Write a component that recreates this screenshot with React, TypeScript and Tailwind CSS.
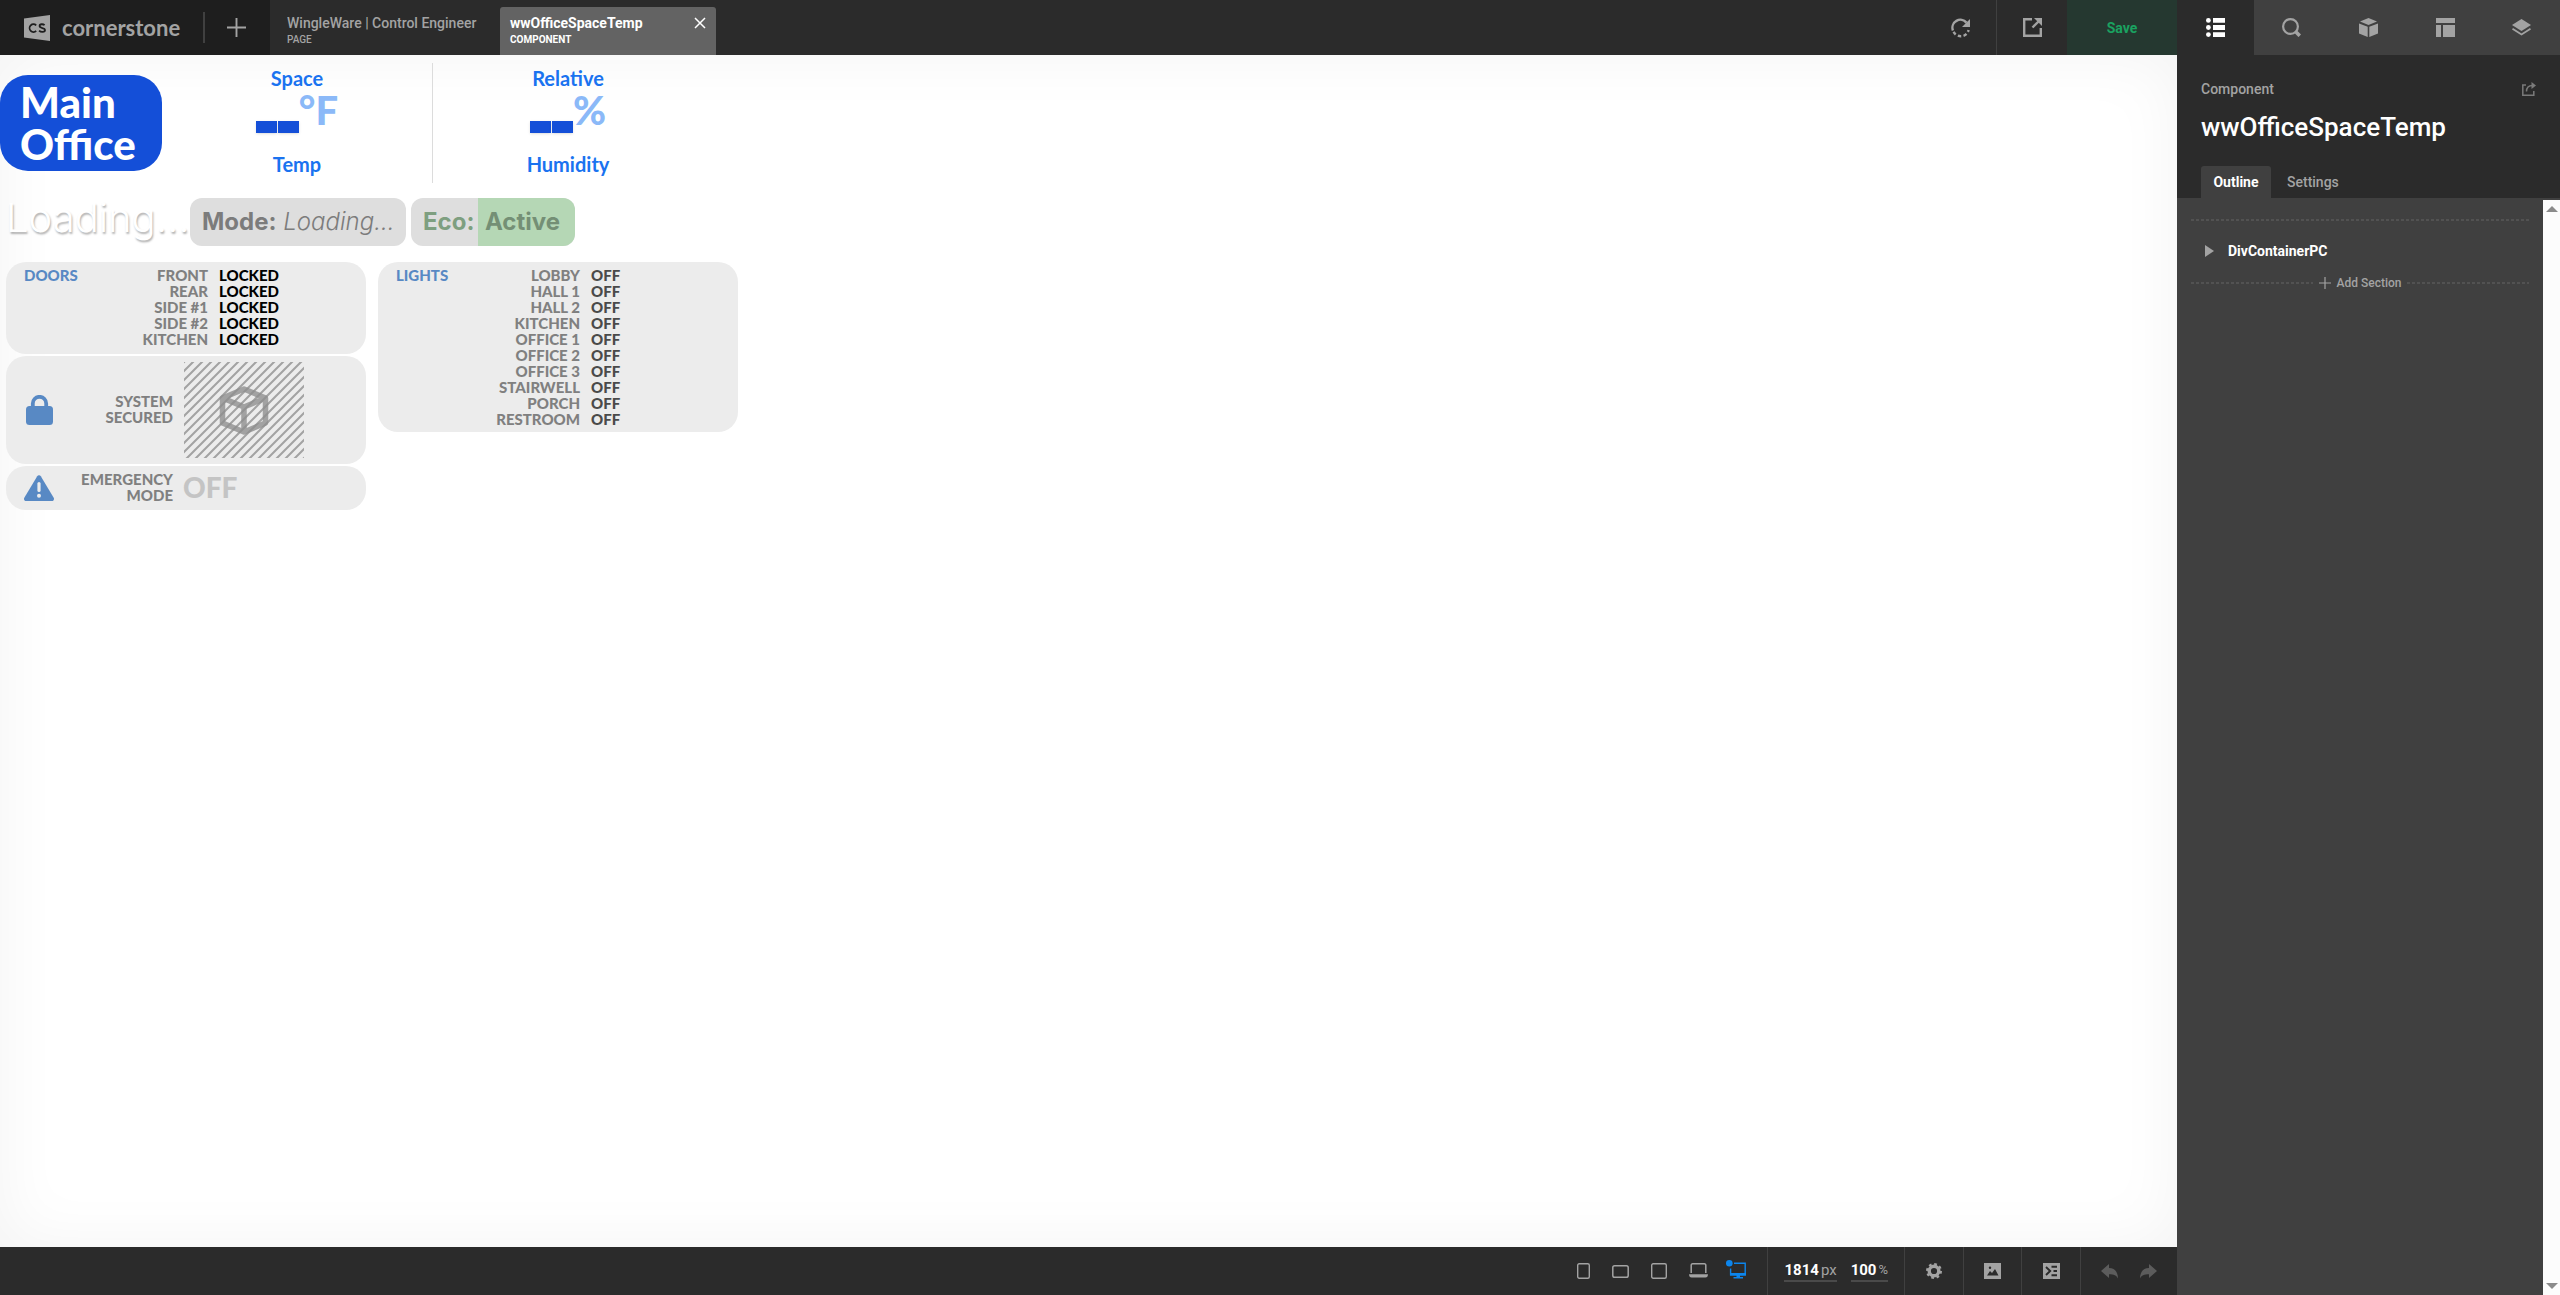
import { useState, type ReactNode } from "react";
import clsx from "clsx";

type IconProps = { className?: string };

const doors = ["FRONT", "REAR", "SIDE #1", "SIDE #2", "KITCHEN"];

const lights = [
  "LOBBY",
  "HALL 1",
  "HALL 2",
  "KITCHEN",
  "OFFICE 1",
  "OFFICE 2",
  "OFFICE 3",
  "STAIRWELL",
  "PORCH",
  "RESTROOM",
];

function LogoMark() {
  return (
    <svg viewBox="0 0 26 26" className="h-[26px] w-[26px] shrink-0">
      <path d="M0 3.4 26 0v26L0 22.6Z" fill="#a3a3a3" />
      <path d="M12.200 10.300a3.900 3.900 0 1 0 0 5.600" fill="none" stroke="#1e1e1e" strokeWidth="1.800" />
      <path
        d="M20.6 10.2c-1.4-1.3-5-1.500-5 .9 0 2.600 5.400 1.200 5.400 3.900 0 2.500-4.200 2.400-5.900.7"
        fill="none"
        stroke="#1e1e1e"
        strokeWidth="1.800"
      />
    </svg>
  );
}

function PlusIcon({ className }: IconProps) {
  return (
    <svg viewBox="0 0 20 20" className={className} fill="none" stroke="currentColor" strokeWidth="2">
      <path d="M10 0v20M0 10h20" />
    </svg>
  );
}

function CloseIcon() {
  return (
    <svg viewBox="0 0 12 12" className="h-3 w-3" fill="none" stroke="currentColor" strokeWidth="1.500">
      <path d="m1 1 10 10M11 1 1 11" />
    </svg>
  );
}

function RefreshIcon() {
  return (
    <svg viewBox="0 0 20 20" className="h-5 w-5">
      <path d="M1.900 12.500A8 8 0 0 1 15.500 4.600" fill="none" stroke="currentColor" strokeWidth="2.400" />
      <path d="M19 1v8h-8Z" fill="currentColor" />
      <path
        d="M2.600 13.800A8 8 0 0 0 17.600 12"
        fill="none"
        stroke="currentColor"
        strokeWidth="2.400"
        strokeDasharray="3.400 2.400"
      />
    </svg>
  );
}

function ExternalIcon() {
  return (
    <svg viewBox="0 0 19 19" className="h-[19px] w-[19px]" fill="none" stroke="currentColor">
      <path d="M9 1.200H1.200v16.600h16.600V10" strokeWidth="2.400" />
      <path d="m9.500 9.500 6-6" strokeWidth="2.400" />
      <path d="M11 0h8v8Z" fill="currentColor" stroke="none" />
    </svg>
  );
}

function ShareIcon() {
  return (
    <svg viewBox="0 0 14 14" className="h-3.5 w-3.5" fill="none" stroke="currentColor" strokeWidth="1.500">
      <path d="M4 3H.8v10.200h11V9" />
      <path d="M4.500 9.500c0-4 2-6 6-6" />
      <path d="M9.500 0 14 3.500 9.500 7Z" fill="currentColor" stroke="none" />
    </svg>
  );
}

function OutlineIcon() {
  return (
    <svg viewBox="0 0 19 19" className="h-[19px] w-[19px]" fill="currentColor">
      <circle cx="2.400" cy="2.400" r="2.400" />
      <circle cx="2.400" cy="9.500" r="2.400" />
      <circle cx="2.400" cy="16.600" r="2.400" />
      <path d="M7 0h12v4.800H7zM7 7.100h12v4.800H7zM7 14.200h12V19H7z" />
    </svg>
  );
}

function SearchIcon() {
  return (
    <svg viewBox="0 0 19 19" className="h-[19px] w-[19px]" fill="none" stroke="currentColor">
      <circle cx="8.500" cy="8.500" r="7.400" strokeWidth="2.200" />
      <path d="m14 14 3.800 3.800" strokeWidth="3.600" />
    </svg>
  );
}

function CubeIcon() {
  return (
    <svg viewBox="0 0 19 19" className="h-[19px] w-[19px]" fill="currentColor">
      <path d="M9.500 0 18 3.500 9.500 7 1 3.500Z" />
      <path d="m0 5.400 8.700 3.400V19L0 15.400ZM19 5.400l-8.700 3.400V19l8.700-3.600Z" />
    </svg>
  );
}

function LayoutIcon() {
  return (
    <svg viewBox="0 0 19 19" className="h-[19px] w-[19px]" fill="currentColor">
      <path d="M0 0h19v5H0zM0 7h5v12H0zM7 7h12v12H7z" />
    </svg>
  );
}

function LayersIcon() {
  return (
    <svg viewBox="0 0 19 19" className="h-[19px] w-[19px]">
      <path d="M9.500 1 19 7l-9.500 6L0 7Z" fill="currentColor" />
      <path d="m.5 10.800 9 5.700 9-5.700" fill="none" stroke="currentColor" strokeWidth="1.800" />
    </svg>
  );
}

function PhoneIcon() {
  return (
    <svg viewBox="0 0 13 16" className="h-4 w-[13px]" fill="none" stroke="currentColor" strokeWidth="1.400">
      <rect x=".7" y=".7" width="11.600" height="14.600" rx="1.500" />
    </svg>
  );
}

function PhoneWideIcon() {
  return (
    <svg viewBox="0 0 17 13" className="h-[13px] w-[17px]" fill="none" stroke="currentColor" strokeWidth="1.500">
      <rect x=".8" y=".8" width="15.400" height="11.400" rx="1.800" />
    </svg>
  );
}

function TabletIcon() {
  return (
    <svg viewBox="0 0 16 16" className="h-4 w-4" fill="none" stroke="currentColor" strokeWidth="1.400">
      <rect x=".7" y=".7" width="14.600" height="14.600" rx="1.500" />
    </svg>
  );
}

function LaptopIcon() {
  return (
    <svg viewBox="0 0 19 16" className="h-4 w-[19px]">
      <path
        d="M2.200 10V2.500a1.500 1.500 0 0 1 1.500-1.700h11.600a1.500 1.500 0 0 1 1.500 1.700V10"
        fill="none"
        stroke="currentColor"
        strokeWidth="1.500"
      />
      <path d="M0 11.200h19c0 2-1 3.300-2.500 3.300h-14C1 14.500 0 13.200 0 11.200Z" fill="currentColor" />
    </svg>
  );
}

function DesktopIcon() {
  return (
    <svg viewBox="0 0 20 19" className="h-[19px] w-5">
      <circle cx="3.300" cy="3.300" r="3.300" fill="currentColor" />
      <path d="M8 3.200h11.200v11.600H4.600V8.500" fill="none" stroke="currentColor" strokeWidth="1.400" />
      <path d="M4 13h16v2.500H4zM10.500 15h3.500v2h3v1.500H7.500V17h3z" fill="currentColor" />
    </svg>
  );
}

function GearIcon() {
  return (
    <svg viewBox="0 0 16 16" className="h-4 w-4">
      <circle cx="8" cy="8" r="4.800" fill="none" stroke="currentColor" strokeWidth="3.400" />
      <circle cx="8" cy="8" r="6.900" fill="none" stroke="currentColor" strokeWidth="2.200" strokeDasharray="2.710" />
    </svg>
  );
}

function ImageIcon() {
  return (
    <svg viewBox="0 0 17 16" className="h-4 w-[17px]">
      <path d="M0 0h17v16H0z" fill="currentColor" />
      <path d="m3 12.500 3-4.500 2 2 3-4 3.500 6.500Z" fill="#2b2b2b" />
      <circle cx="6" cy="4.800" r="1.200" fill="#2b2b2b" />
    </svg>
  );
}

function ConsoleIcon() {
  return (
    <svg viewBox="0 0 17 16" className="h-4 w-[17px]">
      <path d="M0 0h17v16H0z" fill="currentColor" />
      <path d="m3 4 4.200 4L3 12M8.500 3.700H14M10.500 8H14M8.500 12.300H14" fill="none" stroke="#2b2b2b" strokeWidth="1.900" />
    </svg>
  );
}

function UndoIcon({ className }: IconProps) {
  return (
    <svg viewBox="0 0 17 15" className={clsx("h-[15px] w-[17px]", className)} fill="currentColor">
      <path d="M8 0v4c6 .2 8.800 4 9 10.500C15.500 11.500 13 10.200 8 10.200V14L0 7Z" />
    </svg>
  );
}

function LockIcon() {
  return (
    <svg viewBox="0 0 27 30" className="h-[30px] w-[27px]">
      <path d="M6.800 12V8.500a6.700 6.700 0 0 1 13.400 0V12" fill="none" stroke="#5889c4" strokeWidth="3.800" />
      <rect y="11" width="27" height="19" rx="3.500" fill="#5889c4" />
    </svg>
  );
}

function WarningIcon() {
  return (
    <svg viewBox="0 0 30 26" className="h-[26px] w-[30px]">
      <path d="M13.200 1.200a2.100 2.100 0 0 1 3.600 0l12.900 21.600c.8 1.400-.1 3.200-1.800 3.200H2.100C.4 26-.5 24.200.3 22.800Z" fill="#5889c4" />
      <path d="M15 8.500v7" stroke="#ececec" strokeWidth="3.200" strokeLinecap="round" />
      <circle cx="15" cy="20.800" r="2" fill="#ececec" />
    </svg>
  );
}

function Placeholder() {
  return (
    <svg viewBox="0 0 120 96" className="h-24 w-[120px]">
      <defs>
        <pattern id="stripes" width="9" height="9" patternUnits="userSpaceOnUse">
          <path d="M-3 12 12-3M-3 3 3-3M6 12l6-6" stroke="#a3a3a3" strokeWidth="2.100" />
        </pattern>
      </defs>
      <path d="M0 0h120v96H0z" fill="url(#stripes)" />
      <path
        d="M60 27 81.500 36v25L60 70 38.500 61V36ZM38.500 36 60 45l21.500-9M60 45v25"
        fill="none"
        stroke="#8d8d8d"
        strokeOpacity=".78"
        strokeWidth="5.500"
        strokeLinejoin="round"
      />
    </svg>
  );
}

function TopBar() {
  return (
    <header className="flex h-[55px] shrink-0 bg-[#2b2b2b] text-[#a3a3a3]">
      <div className="flex w-[270px] items-center bg-[#1e1e1e] pl-6">
        <a href="#" className="flex items-center gap-3">
          <LogoMark />
          <span className="w-[117px] font-['Lato',sans-serif] text-[22px] leading-6 font-bold">cornerstone</span>
        </a>
        <span className="ml-6 h-[31px] w-0.5 bg-[#404040]" />
        <button type="button" aria-label="New" className="ml-[22px]">
          <PlusIcon className="h-[19px] w-[19px]" />
        </button>
      </div>

      <button type="button" className="mt-[7px] w-[230px] pr-4 pl-[17px] text-left">
        <span className="block overflow-hidden text-sm leading-[18px] font-medium whitespace-nowrap">
          WingleWare | Control Engineer
        </span>
        <span className="block text-[10px] leading-4 font-medium">PAGE</span>
      </button>

      <div className="mt-[7px] flex w-[216px] justify-between rounded-t-[3px] bg-[#636363] px-2.5 text-white">
        <button type="button" className="text-left">
          <span className="block text-sm leading-[18px] font-bold">wwOfficeSpaceTemp</span>
          <span className="block text-[10px] leading-4 font-bold">COMPONENT</span>
        </button>
        <button type="button" aria-label="Close" className="h-8">
          <CloseIcon />
        </button>
      </div>

      <div className="ml-auto flex">
        <button type="button" aria-label="Refresh" className="flex w-[72px] items-center justify-center border-r border-[#404040]">
          <RefreshIcon />
        </button>
        <button type="button" aria-label="Open" className="flex w-[70px] items-center justify-center">
          <ExternalIcon />
        </button>
        <button type="button" className="w-[110px] bg-[#253830] text-sm font-bold text-[#1aa260]">
          Save
        </button>
      </div>
    </header>
  );
}

function Reading({ top, unit, bottom }: { top: string; unit: string; bottom: string }) {
  return (
    <div className="flex w-[270px] flex-col items-center pb-1 text-xl font-bold text-[#1a73f0]">
      <p className="leading-6">{top}</p>
      <p className="flex h-[62px] items-start text-[40px] leading-10 font-black text-[#8bb9f8]">
        <span className="mt-[31px] flex gap-px" aria-label="no reading">
          <span className="h-3 w-[21px] bg-[#144fd8] shadow-sm" />
          <span className="h-3 w-[21px] bg-[#144fd8] shadow-sm" />
        </span>
        <span>{unit}</span>
      </p>
      <p className="leading-6">{bottom}</p>
    </div>
  );
}

function StatusRows({ names, state, stateClass }: { names: string[]; state: string; stateClass: string }) {
  return (
    <table className="self-start leading-4">
      <tbody>
        {names.map((name) => (
          <tr key={name}>
            <th scope="row" className="w-[130px] p-0 text-right font-black text-[#808080]">
              {name}
            </th>
            <td className={clsx("p-0 pl-[11px] font-black", stateClass)}>{state}</td>
          </tr>
        ))}
      </tbody>
    </table>
  );
}

function Card({ className, children }: { className?: string; children: ReactNode }) {
  return <section className={clsx("flex w-[360px] rounded-[20px] bg-[#ececec]", className)}>{children}</section>;
}

function Canvas() {
  return (
    <main className="flex-1 bg-white font-['Lato',sans-serif] shadow-[inset_0_0_65px_rgba(0,0,0,0.05)]">
      <div className="flex pt-2">
        <h1 className="mt-3 h-24 w-[162px] rounded-[28px] bg-[#144fd8] pt-1.5 pl-5 text-[42px] leading-[42px] font-black text-white">
          Main
          <br />
          Office
        </h1>
        <div className="flex h-[120px] divide-x divide-[#dcdcdc]">
          <div className="flex items-center">
            <Reading top="Space" unit="°F" bottom="Temp" />
          </div>
          <div className="flex items-center">
            <Reading top="Relative" unit="%" bottom="Humidity" />
          </div>
        </div>
      </div>

      <div className="mt-[15px] flex h-12 items-center pl-1.5 font-['Inter',sans-serif] text-2xl leading-[48px] text-[#7c7c7c]">
        <p className="w-[184px] pb-2 text-[40px] leading-10 font-light text-white [text-shadow:1px_2px_2px_rgba(0,0,0,0.3)]">
          Loading...
        </p>
        <p className="w-[216px] rounded-xl bg-[#dedede] pl-3 whitespace-nowrap">
          <b>Mode:</b> <i className="font-light">Loading...</i>
        </p>
        <p className="ml-[5px] flex overflow-hidden rounded-xl bg-[#dedede] font-bold">
          <span className="w-[67px] pl-3 text-[#7e9f80]">Eco:</span>
          <span className="w-[97px] bg-[#b5d7b5] pl-[7px] text-[#748f75]">Active</span>
        </p>
      </div>

      <div className="mt-4 flex items-start gap-3 pl-1.5 text-[15px] leading-4 font-black">
        <div className="flex flex-col gap-0.5">
          <Card className="h-[92px] pt-[5px] pl-[18px]">
            <h2 className="w-[54px] text-[#5889c4]">DOORS</h2>
            <StatusRows names={doors} state="LOCKED" stateClass="text-black" />
          </Card>
          <Card className="h-[108px] items-center pl-5">
            <LockIcon />
            <p className="w-[120px] pb-0.5 text-right text-[#808080]">
              SYSTEM
              <br />
              SECURED
            </p>
            <div className="ml-[11px]">
              <Placeholder />
            </div>
          </Card>
          <Card className="h-11 items-center pl-[18px]">
            <WarningIcon />
            <p className="w-[119px] pb-0.5 text-right text-[#808080]">
              EMERGENCY
              <br />
              MODE
            </p>
            <p className="ml-2.5 pb-0.5 text-[28px] text-[#c4c4c4]">OFF</p>
          </Card>
        </div>
        <Card className="h-[170px] pt-[5px] pl-[18px]">
          <h2 className="w-[54px] text-[#5889c4]">LIGHTS</h2>
          <StatusRows names={lights} state="OFF" stateClass="text-[#4a4a4a]" />
        </Card>
      </div>
    </main>
  );
}

function BottomBar() {
  return (
    <footer className="flex h-12 shrink-0 items-center justify-end bg-[#2b2b2b] text-[#a3a3a3]">
      <div className="flex items-center gap-[22px] pr-[21px]">
        <button type="button" aria-label="Phone"><PhoneIcon /></button>
        <button type="button" aria-label="Phone landscape"><PhoneWideIcon /></button>
        <button type="button" aria-label="Tablet"><TabletIcon /></button>
        <button type="button" aria-label="Laptop"><LaptopIcon /></button>
        <button type="button" aria-label="Desktop" className="-ml-1 pb-1 text-[#0c86ee]"><DesktopIcon /></button>
      </div>
      <div className="flex h-full items-center gap-3.5 border-x border-[#404040] px-4 text-[15px] leading-5">
        <p className="flex gap-0.5 border-b-2 border-[#4a4a4a]">
          <b className="text-white">1814</b>
          <span>px</span>
        </p>
        <p className="flex gap-0.5 border-b-2 border-[#4a4a4a]">
          <b className="text-white">100</b>
          <span className="text-[13px]">%</span>
        </p>
      </div>
      <button type="button" aria-label="Preferences" className="flex h-full w-[59px] items-center justify-center border-r border-[#404040]">
        <GearIcon />
      </button>
      <button type="button" aria-label="Images" className="flex h-full w-[58px] items-center justify-center border-r border-[#404040]">
        <ImageIcon />
      </button>
      <button type="button" aria-label="Console" className="flex h-full w-[59px] items-center justify-center border-r border-[#404040]">
        <ConsoleIcon />
      </button>
      <div className="flex h-full items-center gap-[22px] px-5 text-[#5c5c5c]">
        <button type="button" aria-label="Undo"><UndoIcon /></button>
        <button type="button" aria-label="Redo"><UndoIcon className="-scale-x-100" /></button>
      </div>
    </footer>
  );
}

const panels = [
  { name: "Outline", icon: <OutlineIcon /> },
  { name: "Search", icon: <SearchIcon /> },
  { name: "Elements", icon: <CubeIcon /> },
  { name: "Layout", icon: <LayoutIcon /> },
  { name: "Layers", icon: <LayersIcon /> },
];

function DashedLine() {
  return <span className="h-0.5 flex-1 bg-[repeating-linear-gradient(90deg,#525252_0_3px,transparent_3px_5px)]" />;
}

function SidePanel() {
  const [panel, setPanel] = useState("Outline");
  const [tab, setTab] = useState("Outline");

  return (
    <aside className="flex w-[383px] shrink-0 flex-col bg-[#2b2b2b]">
      <nav className="flex h-[55px] shrink-0 bg-[#404040]">
        {panels.map((item) => (
          <button
            key={item.name}
            type="button"
            aria-label={item.name}
            onClick={() => setPanel(item.name)}
            className={clsx(
              "flex flex-1 items-center justify-center",
              panel === item.name ? "bg-[#2b2b2b] text-white" : "text-[#a3a3a3]",
            )}
          >
            {item.icon}
          </button>
        ))}
      </nav>

      <div className="px-6 pt-6">
        <div className="flex items-center justify-between text-[#a3a3a3]">
          <p className="text-sm leading-5 font-medium">Component</p>
          <button type="button" aria-label="Open component" className="text-[#7a7a7a]">
            <ShareIcon />
          </button>
        </div>
        <h2 className="mt-3 text-[26px] leading-8 font-medium text-white">wwOfficeSpaceTemp</h2>
        <div className="mt-[23px] flex text-sm">
          {["Outline", "Settings"].map((name) => (
            <button
              key={name}
              type="button"
              onClick={() => setTab(name)}
              className={clsx(
                "h-8 rounded-t-[3px]",
                tab === name ? "w-[70px] bg-[#404040] font-bold text-white" : "px-4 font-medium text-[#a3a3a3]",
              )}
            >
              {name}
            </button>
          ))}
        </div>
      </div>

      <div className="flex flex-1 bg-[#404040] pt-0.5">
        <div className="flex-1 px-3.5 pt-[19px]">
          <div className="flex">
            <DashedLine />
          </div>
          <button type="button" className="mt-5 flex h-5 items-center gap-3.5 pl-3.5 text-sm font-bold text-white">
            <svg viewBox="0 0 9 12" className="h-3 w-[9px]" fill="#a3a3a3">
              <path d="M0 0 9 6 0 12Z" />
            </svg>
            DivContainerPC
          </button>
          <div className="mt-3 flex h-5 items-center gap-1.5">
            <DashedLine />
            <button type="button" className="flex items-center gap-1.5 text-xs leading-5 font-medium text-[#a3a3a3]">
              <PlusIcon className="h-3 w-3" />
              Add Section
            </button>
            <DashedLine />
          </div>
        </div>
        <div className="flex w-[17px] flex-col items-center justify-between bg-[#fcfcfc] py-1.5 text-[#8b8b8b]">
          <svg viewBox="0 0 12 6" className="h-1.5 w-3" fill="currentColor">
            <path d="m6 0 6 6H0Z" />
          </svg>
          <svg viewBox="0 0 12 6" className="h-1.5 w-3" fill="currentColor">
            <path d="M0 0h12L6 6Z" />
          </svg>
        </div>
      </div>
    </aside>
  );
}

function App() {
  return (
    <div className="flex min-h-screen bg-[#2b2b2b] font-['Roboto',sans-serif]">
      <div className="flex min-w-0 flex-1 flex-col">
        <TopBar />
        <Canvas />
        <BottomBar />
      </div>
      <SidePanel />
    </div>
  );
}

export default App;
